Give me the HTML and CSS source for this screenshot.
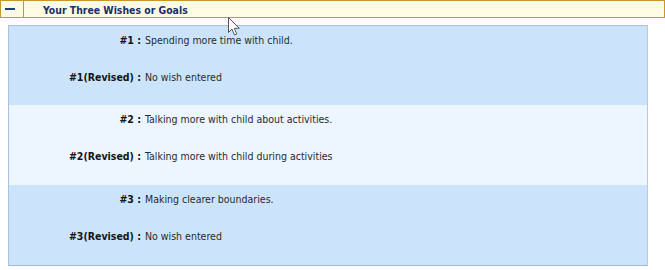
FILE: index.html
```html
<!DOCTYPE html>
<html>
<head>
<meta charset="utf-8">
<link rel="stylesheet" href="styles.css">
</head>
<body>
<div class="section-head">
  <div class="toggle"><span class="minus"></span></div>
  <div class="title">Your Three Wishes or Goals</div>
</div>
<div class="panel">
  <div class="wish odd">
    <div class="lbl">#1 :</div><div class="val">Spending more time with child.</div>
    <div class="lbl">#1(Revised) :</div><div class="val">No wish entered</div>
  </div>
  <div class="wish even">
    <div class="lbl">#2 :</div><div class="val">Talking more with child about activities.</div>
    <div class="lbl">#2(Revised) :</div><div class="val">Talking more with child during activities</div>
  </div>
  <div class="wish odd">
    <div class="lbl">#3 :</div><div class="val">Making clearer boundaries.</div>
    <div class="lbl">#3(Revised) :</div><div class="val">No wish entered</div>
  </div>
</div>
<svg class="cursor" width="13" height="20" viewBox="0 0 13 20">
  <path d="M0.5 0.5 L0.5 15.5 L4 12 L6.5 18 L8.8 17 L6.3 11.3 L11.3 11.3 Z" fill="#fff" stroke="#555" stroke-width="1" stroke-linejoin="round"/>
</svg>
</body>
</html>
```
FILE: styles.css
```css
html, body {
  margin: 0;
  padding: 0;
  background: #ffffff;
}
body {
  font-family: "DejaVu Sans Condensed", "DejaVu Sans", sans-serif;
  font-size: 10.5px;
  color: #222;
  position: relative;
  width: 665px;
  height: 270px;
  overflow: hidden;
}
.section-head {
  display: flex;
  height: 16px;
  border: 1px solid #c99530;
  background: #fffbe2;
  box-sizing: content-box;
}
.toggle {
  width: 23px;
  border-right: 1px solid #c99530;
  display: flex;
  align-items: center;
  justify-content: flex-start;
  padding-left: 4px;
  box-sizing: border-box;
}
.minus {
  display: block;
  width: 10px;
  height: 2px;
  background: #1d3c8c;
}
.title {
  padding-left: 19px;
  padding-top: 1px;
  font-weight: bold;
  font-size: 10.4px;
  line-height: 16px;
  color: #182f6c;
}
.panel {
  margin: 7px 0 0 8px;
  width: 638px;
  border: 1px solid #a8c2de;
  border-right-color: #b4cbe4;
  border-bottom-color: #a0bad8;
}
.wish {
  display: grid;
  grid-template-columns: 132px 1fr;
  column-gap: 4px;
  row-gap: 24px;
  padding: 8px 0 22px;
  line-height: 13px;
}
.wish.odd { background: #cce4fb; }
.wish.even { background: #edf5fe; }
.wish:first-child { padding-top: 8px; padding-bottom: 21px; }
.lbl {
  text-align: right;
  font-weight: bold;
  color: #141414;
}
.val {
  color: #2a2a2a;
}
.cursor {
  position: absolute;
  left: 228px;
  top: 17px;
}
```
